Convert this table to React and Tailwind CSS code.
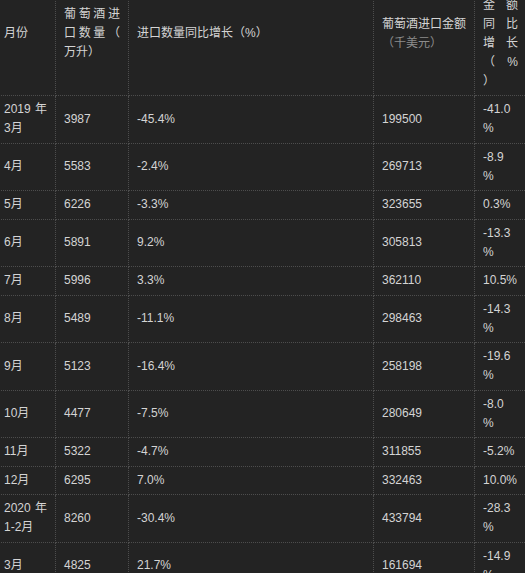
import React from 'react';

const rows = [
  [['2019 年', '3月'], '3987', '-45.4%', '199500', ['-41.0', '%']],
  [['4月'], '5583', '-2.4%', '269713', ['-8.9', '%']],
  [['5月'], '6226', '-3.3%', '323655', ['0.3%']],
  [['6月'], '5891', '9.2%', '305813', ['-13.3', '%']],
  [['7月'], '5996', '3.3%', '362110', ['10.5%']],
  [['8月'], '5489', '-11.1%', '298463', ['-14.3', '%']],
  [['9月'], '5123', '-16.4%', '258198', ['-19.6', '%']],
  [['10月'], '4477', '-7.5%', '280649', ['-8.0', '%']],
  [['11月'], '5322', '-4.7%', '311855', ['-5.2%']],
  [['12月'], '6295', '7.0%', '332463', ['10.0%']],
  [['2020 年', '1-2月'], '8260', '-30.4%', '433794', ['-28.3', '%']],
  [['3月'], '4825', '21.7%', '161694', ['-14.9', '%']],
];

const cell =
  'border border-dotted border-[#4d4d4d] px-2 py-[4.25px] align-middle text-left leading-[19px] font-normal';

// wrapped lines; every line but the last is stretched edge to edge like a justified paragraph
const Lines = ({ lines }) => (
  <>
    {lines.map((l, i) => (
      <span
        key={i}
        className={i < lines.length - 1 ? 'block text-justify [text-align-last:justify]' : 'block'}
      >
        {l}
      </span>
    ))}
  </>
);

export default function App() {
  return (
    <div
      className="h-[573px] w-[525px] overflow-hidden bg-[#232323] text-[12px] text-[#d4d4d4]"
      style={{ fontFamily: '"Liberation Sans", "Noto Sans CJK SC", sans-serif' }}
    >
      <table className="-ml-[5px] -mt-[28.5px] w-[531px] table-fixed border-collapse">
        <colgroup>
          <col className="w-[60px]" />
          <col className="w-[73px]" />
          <col className="w-[245px]" />
          <col className="w-[101px]" />
          <col className="w-[52px]" />
        </colgroup>
        <thead>
          <tr>
            <th className={cell}>月份</th>
            <th className={cell}>
              <Lines lines={['葡萄酒进', '口数量（', '万升）']} />
            </th>
            <th className={cell}>进口数量同比增长（%）</th>
            <th className={cell}>
              葡萄酒进口金额
              <br />
              <span className="text-[#8c8c8c]">（千美元）</span>
            </th>
            <th className={cell}>
              <Lines lines={['进口', '金额', '同比', '增长', '（%', '）']} />
            </th>
          </tr>
        </thead>
        <tbody>
          {rows.map((r) => (
            <tr key={r[0].join('')}>
              <td className={cell}>
                <Lines lines={r[0]} />
              </td>
              <td className={cell}>{r[1]}</td>
              <td className={cell}>{r[2]}</td>
              <td className={cell}>{r[3]}</td>
              <td className={cell}>
                <Lines lines={r[4]} />
              </td>
            </tr>
          ))}
        </tbody>
      </table>
    </div>
  );
}
